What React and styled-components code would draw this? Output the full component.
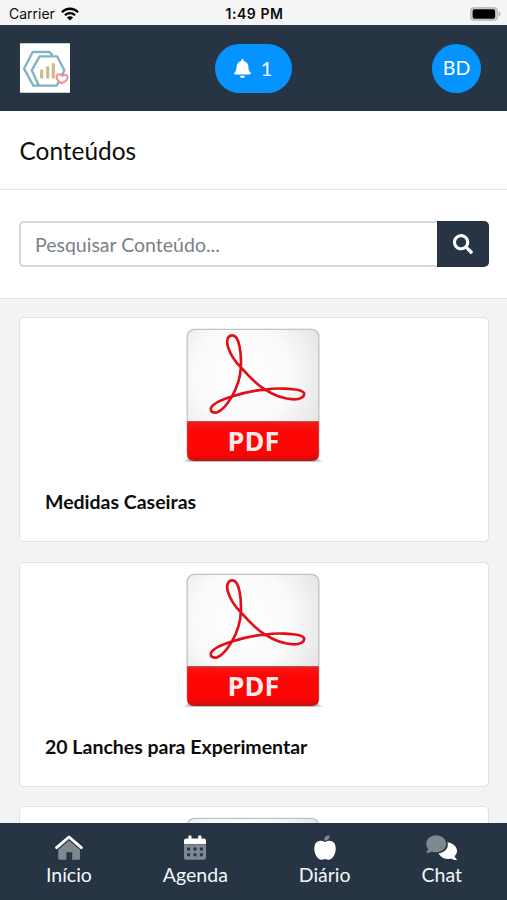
import React from "react";
import styled, { createGlobalStyle } from "styled-components";
import { FaBell, FaSearch } from "react-icons/fa";

const theme = {
  navy: "#273444",
  blue: "#0593ff",
  grey: "#f3f3f3",
  line: "#e3e3e3",
  muted: "#7f8791"
};

const contents = [
  { id: 1, title: "Medidas Caseiras" },
  { id: 2, title: "20 Lanches para Experimentar" },
  { id: 3 }
];

const LogoImage = () => (
  <svg width="50" height="50" viewBox="60 129 150 148" fill="none">
    <path fill="#fff" d="M60 129h150v148H60z" />
    <g stroke="#7fb3c3" strokeWidth="7" strokeLinejoin="round">
      <path d="M158 165L148 155H98L72 205L100 256H112L114 246" />
      <path d="M119 168H171L193 210L170 256H117L95 210Z" />
    </g>
    <path
      stroke="#cfbd91"
      strokeWidth="10"
      strokeLinecap="round"
      d="M125 212v18M143 202v28M160 192v38"
    />
    <path
      fill="#fff"
      stroke="#f28b99"
      strokeWidth="6"
      strokeLinejoin="round"
      d="M184 249C174 242 168 234 170 227C173 220 182 220 187 227C193 221 202 223 203 230C203 239 194 245 184 249Z"
    />
  </svg>
);

const WifiIcon = () => (
  <svg width="18" height="14" viewBox="0 0 18 14" fill="none" stroke="#000">
    <path strokeWidth="2.3" d="M.9 5.2C5.4.6 12.6.6 17.1 5.2" />
    <path strokeWidth="2.2" d="M3.9 8.2C6.8 5.4 11.2 5.4 14.1 8.2" />
    <path fill="#000" stroke="none" d="M5.9 10.4C7.7 8.8 10.3 8.8 12.1 10.4L9 13.5Z" />
  </svg>
);

const BatteryIcon = () => (
  <svg width="31" height="14" viewBox="0 0 31 14">
    <rect x=".8" y=".8" width="26.4" height="12.4" rx="3.4" fill="#ddd" stroke="#b3b3b3" strokeWidth="1.2" />
    <rect x="2.6" y="2.2" width="22.6" height="9.6" rx="1.8" />
    <path fill="#b3b3b3" d="M28.5 4.6c2.6.8 2.6 4 0 4.8z" />
  </svg>
);

const PdfIcon = () => (
  <svg width="145" height="140" viewBox="34.5 30 435 420">
    <defs>
      <radialGradient id="paper" cx=".42" cy=".35" r=".75">
        <stop offset="0" stopColor="#fff" />
        <stop offset=".5" stopColor="#fafafa" />
        <stop offset="1" stopColor="#dedede" />
      </radialGradient>
      <linearGradient id="band" x1="0" y1="0" x2="0" y2="1">
        <stop offset="0" stopColor="#f21a1a" />
        <stop offset=".25" stopColor="#ff0606" />
        <stop offset=".85" stopColor="#fa0505" />
        <stop offset="1" stopColor="#b81414" />
      </linearGradient>
      <linearGradient id="shadow">
        <stop offset="0" stopColor="#777" stopOpacity="0" />
        <stop offset=".07" stopColor="#777" stopOpacity=".7" />
        <stop offset=".93" stopColor="#777" stopOpacity=".7" />
        <stop offset="1" stopColor="#777" stopOpacity="0" />
      </linearGradient>
    </defs>
    <path fill="url(#shadow)" d="M35 440Q48 436 54 429H441Q447 436 460 440Z" />
    <rect x="50" y="43" width="395" height="396" rx="22" fill="url(#paper)" stroke="#c2c2c2" strokeWidth="4" />
    <path fill="url(#band)" d="M50 320H445V417Q445 438 424 438H71Q50 438 50 417Z" />
    <path stroke="#b04040" strokeWidth="3" d="M50 320H445" />
    <path
      fill="none"
      stroke="#df1018"
      strokeWidth="8"
      strokeLinejoin="round"
      d="M186 61C170 61 167 79 173 97C181 123 196 142 212 158C234 183 258 208 284 224C310 241 342 252 370 253C391 253 402 245 401 236C399 225 372 222 341 221C321 220 301 221 284 224C249 226 217 234 187 244C154 254 125 266 121 281C120 290 128 295 140 292C157 287 172 265 184 245C200 217 210 186 211 156C213 118 207 61 186 61Z"
    />
    <PdfLabel x="249" y="408" textAnchor="middle">
      PDF
    </PdfLabel>
  </svg>
);

const HomeIcon = () => (
  <svg width="28" height="25" viewBox="0 0 28 25">
    <path
      fill={theme.muted}
      d="M14 5.5L25 14.8V23.4Q25 24.7 23.7 24.7H17.2V17.2H11.4V24.7H4.5Q3.2 24.7 3.2 23.4V14.8Z"
    />
    <path
      fill="none"
      stroke="#fff"
      strokeWidth="2.9"
      strokeLinecap="round"
      strokeLinejoin="round"
      d="M1.6 12.6L14 2L26.3 12.6"
    />
  </svg>
);

const CalendarIcon = () => (
  <svg width="22" height="25" viewBox="0 0 22 25">
    <path fill={theme.muted} d="M0 9.3H22V22.5Q22 24.7 19.8 24.7H2.2Q0 24.7 0 22.5Z" />
    <path
      fill="#fff"
      d="M0 9V5.5Q0 3.5 2.2 3.5H4.4V1.1Q4.4.4 5.2.4H6.8Q7.5.4 7.5 1.1V3.5H14.2V1.1Q14.2.4 15 .4H16.7Q17.4.4 17.4 1.1V3.5H19.8Q22 3.5 22 5.5V9Z"
    />
    {[3.1, 9.5, 15.9].map(x =>
      [12.4, 18.3].map(y => (
        <rect key={`${x}-${y}`} x={x} y={y} width="3" height="3" rx=".5" fill={theme.navy} />
      ))
    )}
  </svg>
);

const AppleIcon = () => (
  <svg width="22" height="25" viewBox="0 0 22 25">
    <path fill={theme.muted} d="M10.2 5.5C9.8 2.4 12.2 0 15.6.5C15.8 3.7 13.8 5.8 10.2 5.5Z" />
    <path
      fill="#fff"
      d="M11 7C7.7 5 3.6 5 1.6 8.3C-.9 12.5.2 20.2 4.6 23.7C6.8 25.4 8.9 24.7 11 24C13.1 24.7 15.2 25.4 17.4 23.7C21.8 20.2 22.9 12.5 20.4 8.3C18.4 5 14.3 5 11 7Z"
    />
  </svg>
);

const ChatIcon = () => (
  <svg width="31" height="25" viewBox="0 0 31 25">
    <path
      fill="#fff"
      d="M21.4 7.2C27 8 31 11.7 31 15.8C31 17.9 30.1 19.8 28.6 21.2C29.1 22.5 30 23.5 30.7 24.1C31.1 24.5 30.8 25 30.3 25C28 25 26.2 24.2 24.9 23.4C19.8 25.1 14.3 22.5 12.7 18.3C18.7 17.5 23.2 12.9 21.4 7.2Z"
    />
    <path
      fill={theme.muted}
      d="M10.2.3C15.8.3 20.2 4.1 20.2 8.8S15.8 17.3 10.2 17.3C8.6 17.3 7.1 17 5.8 16.4C4.5 17.2 2.9 17.8.7 17.8C.1 17.8-.1 17.3.3 16.9C1.1 16 1.9 15 2.3 13.9C.9 12.5.2 10.7.2 8.8C.2 4.1 4.6.3 10.2.3Z"
    />
  </svg>
);

const tabs = [
  { label: "Início", icon: <HomeIcon /> },
  { label: "Agenda", icon: <CalendarIcon /> },
  { label: "Diário", icon: <AppleIcon /> },
  { label: "Chat", icon: <ChatIcon /> }
];

const App = () => (
  <>
    <GlobalStyle />
    <Screen>
      <StatusBar>
        <Carrier>
          Carrier <WifiIcon />
        </Carrier>
        <Clock>1:49 PM</Clock>
        <Battery>
          <BatteryIcon />
        </Battery>
      </StatusBar>
      <Header>
        <LogoImage />
        <Notifications>
          <FaBell size={19} />
          <span>1</span>
        </Notifications>
        <Avatar>BD</Avatar>
      </Header>
      <PageTitle>Conteúdos</PageTitle>
      <SearchSection>
        <SearchInput placeholder="Pesquisar Conteúdo..." />
        <SearchButton aria-label="Pesquisar">
          <FaSearch size={20} />
        </SearchButton>
      </SearchSection>
      <ContentList>
        {contents.map(content => (
          <Card key={content.id}>
            <PdfIcon />
            {content.title && <CardTitle>{content.title}</CardTitle>}
          </Card>
        ))}
      </ContentList>
      <TabBar>
        {tabs.map(tab => (
          <Tab key={tab.label}>
            {tab.icon}
            <span>{tab.label}</span>
          </Tab>
        ))}
      </TabBar>
    </Screen>
  </>
);

export default App;

const GlobalStyle = createGlobalStyle`
  * {
    box-sizing: border-box;
  }

  body {
    margin: 0;
    font-family: Lato, "Liberation Sans", sans-serif;
    color: #0c0c0c;
  }

  svg {
    display: block;
    flex-shrink: 0;
  }
`;

const Screen = styled.div`
  display: flex;
  flex-direction: column;
  height: 100vh;
  overflow: hidden;
  background-color: ${theme.grey};
`;

const StatusBar = styled.div`
  display: grid;
  grid-template-columns: 1fr auto 1fr;
  align-items: center;
  flex: 0 0 25px;
  padding: 2px 6px 0 8px;
  background-color: #f5f5f5;
  font-family: Inter, sans-serif;
  font-size: 14px;
`;

const Carrier = styled.div`
  display: flex;
  align-items: center;
  gap: 6px;
  padding-left: 1px;
`;

const Clock = styled.div`
  font-weight: 600;
  letter-spacing: 0.55px;
`;

const Battery = styled.div`
  display: flex;
  justify-content: flex-end;
`;

const Header = styled.header`
  display: flex;
  align-items: center;
  justify-content: space-between;
  flex: 0 0 86px;
  padding: 0 26px 0 20px;
  background-color: ${theme.navy};
  color: white;
  font-size: 20px;
`;

const Notifications = styled.div`
  display: flex;
  align-items: center;
  justify-content: center;
  gap: 9px;
  width: 77px;
  height: 49px;
  margin-left: 4px;
  padding-right: 1px;
  border-radius: 25px;
  background-color: ${theme.blue};
`;

const Avatar = styled.div`
  display: flex;
  align-items: center;
  justify-content: center;
  width: 49px;
  height: 49px;
  padding-bottom: 2px;
  border-radius: 50%;
  background-color: ${theme.blue};
  font-size: 19.5px;
`;

const PageTitle = styled.h1`
  flex: 0 0 79px;
  margin: 0;
  padding: 2px 19.5px 0;
  border-bottom: 1px solid ${theme.line};
  background-color: white;
  font-size: 24.4px;
  font-weight: 400;
  line-height: 76px;
`;

const SearchSection = styled.div`
  display: flex;
  flex: 0 0 109px;
  padding: 31px 18px 31px 19px;
  border-bottom: 1px solid ${theme.line};
  background-color: white;
`;

const SearchInput = styled.input`
  flex: 1;
  min-width: 0;
  padding: 1px 14px 0;
  border: 2px solid #d8d8d8;
  border-right: 0;
  border-radius: 5px 0 0 5px;
  font-family: inherit;
  font-size: 19.5px;

  &::placeholder {
    color: #7b8187;
  }
`;

const SearchButton = styled.button`
  display: flex;
  align-items: center;
  justify-content: center;
  width: 52px;
  padding: 0;
  border: 0;
  border-radius: 0 5px 5px 0;
  background-color: ${theme.navy};
  color: white;
`;

const ContentList = styled.main`
  display: flex;
  flex: 1;
  flex-direction: column;
  gap: 19.5px;
  min-height: 0;
  padding: 18.3px 18px 0 19px;
  overflow: hidden;
`;

const Card = styled.article`
  display: flex;
  flex: 0 0 225px;
  flex-direction: column;
  align-items: center;
  padding: 7px 25px 0;
  border: 1px solid ${theme.line};
  border-radius: 5px;
  background-color: white;
`;

const CardTitle = styled.h2`
  align-self: stretch;
  margin: 25px 0 0;
  font-size: 19.5px;
  font-weight: 700;
  line-height: 24px;
`;

const PdfLabel = styled.text`
  fill: #fbeaea;
  font-family: "Open Sans", sans-serif;
  font-size: 81px;
  font-weight: 700;
`;

const TabBar = styled.nav`
  display: flex;
  justify-content: space-between;
  flex: 0 0 77px;
  padding: 12px 45px 0 46px;
  background-color: ${theme.navy};
  color: #f4f7fa;
`;

const Tab = styled.div`
  display: flex;
  flex-direction: column;
  align-items: center;
  gap: 2px;
  font-size: 19.5px;
  line-height: 25px;
`;
